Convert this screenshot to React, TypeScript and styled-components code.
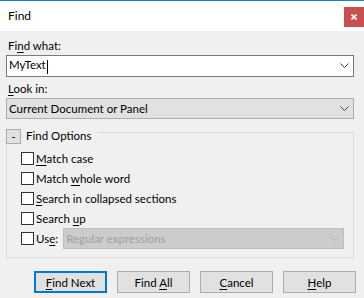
import React from 'react';
import styled, {createGlobalStyle, css} from 'styled-components';

const GlobalStyle = createGlobalStyle`
  html, body {
    margin: 0;
    padding: 0;
    background: #f0f0f0;
  }
  body {
    font-family: Lato, 'Liberation Sans', sans-serif;
    font-size: 11.5px;
    color: #000;
  }
`;

const Window = styled.div`
  width: 364px;
  height: 298px;
  box-sizing: border-box;
  border-top: 1px solid #1883d7;
  background: #f0f0f0;
  display: flex;
  flex-direction: column;
`;

const TitleBar = styled.div`
  height: 30px;
  background: #fff;
  display: flex;
  align-items: flex-start;
  padding-left: 8px;
`;

const Title = styled.span`
  line-height: 30px;
  font-size: 12px;
`;

const CloseButton = styled.div`
  margin-left: auto;
  margin-top: 6px;
  width: 20px;
  height: 20px;
  background: #c75050;
  display: flex;
  align-items: center;
  justify-content: center;
`;

const Body = styled.div`
  padding: 7px 10px 0 6px;
  display: flex;
  flex-direction: column;
`;

const FieldLabel = styled.div<{$top?: number}>`
  padding-left: 2px;
  height: 16px;
  line-height: 16px;
  margin-bottom: 1px;
  margin-top: ${(p) => p.$top ?? 0}px;
`;

const Key = styled.span`
  text-decoration: underline;
  text-underline-offset: 2px;
`;

const boxBase = css`
  box-sizing: border-box;
  display: flex;
  align-items: center;
  padding: 0 4px 0 2px;
`;

const TextBox = styled.div`
  ${boxBase};
  height: 22px;
  background: #fff;
  border: 1px solid #7a7a7a;
`;

const Caret = styled.span`
  display: inline-block;
  width: 1px;
  height: 14px;
  background: #000;
  vertical-align: middle;
  margin-left: 1px;
`;

const Combo = styled.div<{$disabled?: boolean}>`
  ${boxBase};
  height: 21px;
  background: ${(p) => (p.$disabled ? '#cccccc' : '#e1e1e1')};
  border: 1px solid ${(p) => (p.$disabled ? '#bfbfbf' : '#adadad')};
  color: ${(p) => (p.$disabled ? '#a0a0a0' : '#000')};
`;

const ComboText = styled.span`
  flex: 1;
  white-space: nowrap;
`;

const GroupBox = styled.div`
  margin-top: 13px;
  border: 1px solid #dcdcdc;
  padding-bottom: 8px;
`;

const GroupHeader = styled.div`
  display: flex;
  align-items: center;
  margin: -4px 0 0 -1px;
  height: 15px;
`;

const ToggleButton = styled.div`
  box-sizing: border-box;
  width: 15px;
  height: 15px;
  background: #e1e1e1;
  border: 1px solid #adadad;
  display: flex;
  align-items: center;
  justify-content: center;
  font-size: 11px;
  line-height: 1;
  padding-bottom: 1px;
`;

const GroupTitle = styled.span`
  background: #f0f0f0;
  padding: 0 5px;
  line-height: 15px;
  margin-top: -3px;
`;

const Options = styled.div`
  padding: 4px 9px 0 14px;
  display: flex;
  flex-direction: column;
`;

const OptionRow = styled.label<{$tall?: boolean}>`
  display: flex;
  align-items: center;
  height: ${(p) => (p.$tall ? 21 : 20)}px;
`;

const CheckBox = styled.span`
  box-sizing: border-box;
  width: 13px;
  height: 13px;
  background: #fff;
  border: 1px solid #333;
  margin-right: 2px;
  flex: none;
`;

const UseCombo = styled(Combo)`
  flex: 1;
  margin-left: 5px;
`;

const ButtonRow = styled.div`
  display: flex;
  justify-content: flex-end;
  gap: 10px;
  margin-top: 13px;
  margin-right: -2px;
`;

const Button = styled.div<{$default?: boolean}>`
  box-sizing: border-box;
  width: 73px;
  height: 22px;
  background: #e1e1e1;
  border: ${(p) => (p.$default ? '2px solid #0078d7' : '1px solid #adadad')};
  display: flex;
  align-items: center;
  justify-content: center;
`;

const Chevron: React.FC<{color?: string}> = ({color = '#444'}) => (
  <svg width="9" height="6" viewBox="0 0 9 6">
    <polyline points="0.5,0.5 4.5,4.5 8.5,0.5" fill="none" stroke={color} strokeWidth="1" />
  </svg>
);

const CloseIcon = () => (
  <svg width="6" height="6" viewBox="0 0 6 6">
    <path d="M0.5 0.5 L5.5 5.5 M5.5 0.5 L0.5 5.5" stroke="#fff" strokeWidth="1.6" />
  </svg>
);

const options: {before: string; key: string; after: string}[] = [
  {before: '', key: 'M', after: 'atch case'},
  {before: 'Match ', key: 'w', after: 'hole word'},
  {before: '', key: 'S', after: 'earch in collapsed sections'},
  {before: 'Search ', key: 'u', after: 'p'},
];

export default function App() {
  return (
    <>
      <GlobalStyle />
      <Window>
        <TitleBar>
          <Title>Find</Title>
          <CloseButton>
            <CloseIcon />
          </CloseButton>
        </TitleBar>
        <Body>
          <FieldLabel>
            Fi<Key>n</Key>d what:
          </FieldLabel>
          <TextBox>
            <ComboText>
              MyText
              <Caret />
            </ComboText>
            <Chevron />
          </TextBox>
          <FieldLabel $top={4}>
            <Key>L</Key>ook in:
          </FieldLabel>
          <Combo>
            <ComboText>Current Document or Panel</ComboText>
            <Chevron />
          </Combo>
          <GroupBox>
            <GroupHeader>
              <ToggleButton>-</ToggleButton>
              <GroupTitle>Find Options</GroupTitle>
            </GroupHeader>
            <Options>
              {options.map((o) => (
                <OptionRow key={o.key}>
                  <CheckBox />
                  <span>
                    {o.before}
                    <Key>{o.key}</Key>
                    {o.after}
                  </span>
                </OptionRow>
              ))}
              <OptionRow $tall>
                <CheckBox />
                <span>
                  Us<Key>e</Key>:
                </span>
                <UseCombo $disabled>
                  <ComboText>Regular expressions</ComboText>
                  <Chevron color="#b4b4b4" />
                </UseCombo>
              </OptionRow>
            </Options>
          </GroupBox>
          <ButtonRow>
            <Button $default>
              <span>
                <Key>F</Key>ind Next
              </span>
            </Button>
            <Button>
              <span>
                Find <Key>A</Key>ll
              </span>
            </Button>
            <Button>
              <span>
                <Key>C</Key>ancel
              </span>
            </Button>
            <Button>
              <span>
                <Key>H</Key>elp
              </span>
            </Button>
          </ButtonRow>
        </Body>
      </Window>
    </>
  );
}
